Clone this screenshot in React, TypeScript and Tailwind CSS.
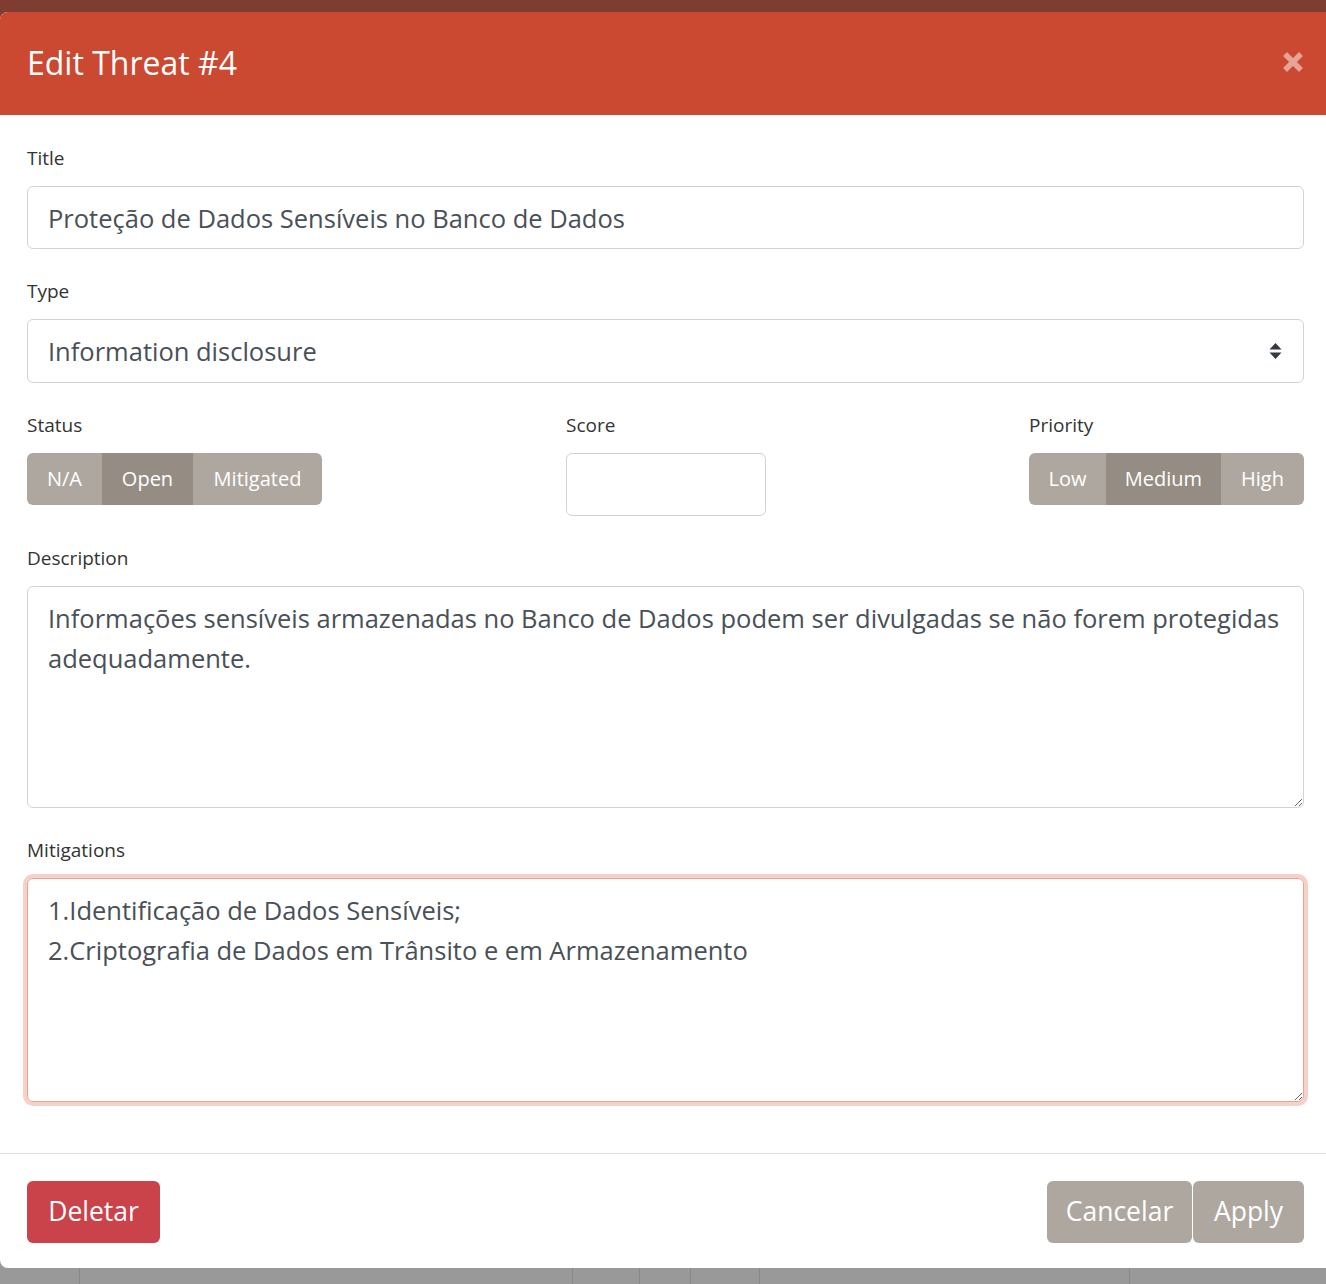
import { useState } from 'react'

const font = { fontFamily: '"Open Sans", "Noto Sans", sans-serif' }

function Label({ children }: { children: React.ReactNode }) {
  return <label className="block text-[19px] leading-[26px] text-[#333] mb-[15px]">{children}</label>
}

function Segmented({ options, active, widths }: { options: string[]; active: string; widths: string[] }) {
  return (
    <div className="inline-flex h-[52px] rounded-[6px] overflow-hidden">
      {options.map((o, i) => (
        <button
          key={o}
          type="button"
          className={`${widths[i]} h-full text-[20px] text-white flex items-center justify-center ${
            o === active ? 'bg-[#958d84]' : 'bg-[#aea79f]'
          }`}
        >
          {o}
        </button>
      ))}
    </div>
  )
}

export default function App() {
  const [title, setTitle] = useState('Proteção de Dados Sensíveis no Banco de Dados')
  const [desc, setDesc] = useState(
    'Informações sensíveis armazenadas no Banco de Dados podem ser divulgadas se não forem protegidas\nadequadamente.'
  )
  const [mit, setMit] = useState('1.Identificação de Dados Sensíveis;\n2.Criptografia de Dados em Trânsito e em Armazenamento')

  return (
    <div className="relative w-[1326px] h-[1284px] overflow-hidden bg-[#999999]" style={font}>
      {/* page behind the backdrop */}
      <div className="flex flex-col h-full">
        <div className="h-[40px] bg-[#7f3d31]" />
        <div className="flex-1" />
        <div className="h-[24px] flex border-t border-[#888]">
          <div className="w-[80px] border-r border-[#888]" />
          <div className="w-[493px] border-r border-[#888]" />
          <div className="w-[67px] border-r border-[#888]" />
          <div className="w-[51px] border-r border-[#888]" />
          <div className="w-[69px] border-r border-[#888] " />
          <div className="w-[370px] border-r border-[#888] pl-[34px] text-[18px] leading-[20px] text-[#7a2c20] -mt-[14px]">
            # 4 Proteção de Dados
          </div>
          <div className="flex-1" />
        </div>
      </div>

      {/* modal */}
      <div className="absolute left-0 top-[12px] w-[1331px] h-[1256px] bg-white rounded-tl-[8px] rounded-bl-[8px] overflow-hidden flex flex-col">
        <div className="h-[103px] shrink-0 bg-[#cb4831] flex items-center justify-between px-[27px]">
          <h2 className="text-[32px] font-medium text-white leading-none pb-[2px]">Edit Threat #4</h2>
          <button type="button" className="text-[#e6a396] mr-[1px] mt-[-4px]">
            <svg width="20" height="20" viewBox="0 0 20 20">
              <path d="M4 4 L16 16 M16 4 L4 16" stroke="currentColor" strokeWidth="5.5" strokeLinecap="square" />
            </svg>
          </button>
        </div>

        <div className="flex-1 px-[27px] pt-[30px]">
          <Label>Title</Label>
          <input
            value={title}
            onChange={e => setTitle(e.target.value)}
            className="w-full h-[63px] border border-[#ced4da] rounded-[6px] px-[20px] text-[25.5px] text-[#495057] outline-none"
          />

          <div className="mt-[29px]">
            <Label>Type</Label>
            <div className="relative h-[64px] border border-[#ced4da] rounded-[6px] flex items-center px-[20px] text-[25.5px] text-[#495057]">
              Information disclosure
              <svg className="absolute right-[21px] top-[23px]" width="13" height="16" viewBox="0 0 13 16">
                <path d="M6.5 0 L12.5 6.5 L0.5 6.5 Z M0.5 9.5 L12.5 9.5 L6.5 16 Z" fill="#343a40" />
              </svg>
            </div>
          </div>

          <div className="mt-[29px] flex">
            <div className="w-[539px]">
              <Label>Status</Label>
              <Segmented options={['N/A', 'Open', 'Mitigated']} active="Open" widths={['w-[75px]', 'w-[91px]', 'w-[129px]']} />
            </div>
            <div className="w-[463px]">
              <Label>Score</Label>
              <input className="w-[200px] h-[63px] border border-[#ced4da] rounded-[6px] outline-none" />
            </div>
            <div>
              <Label>Priority</Label>
              <Segmented options={['Low', 'Medium', 'High']} active="Medium" widths={['w-[77px]', 'w-[115px]', 'w-[83px]']} />
            </div>
          </div>

          <div className="mt-[29px]">
            <Label>Description</Label>
            <textarea
              value={desc}
              onChange={e => setDesc(e.target.value)}
              className="block w-full h-[222px] border border-[#ced4da] rounded-[6px] px-[20px] py-[11px] text-[25.5px] leading-[40px] text-[#495057] outline-none whitespace-pre overflow-hidden"
            />
          </div>

          <div className="mt-[29px]">
            <Label>Mitigations</Label>
            <textarea
              value={mit}
              onChange={e => setMit(e.target.value)}
              className="block w-full h-[224px] border border-[#eea193] rounded-[6px] px-[20px] py-[11px] text-[25.5px] leading-[40px] text-[#495057] outline-none ring-4 ring-[#f6d1c9] overflow-hidden"
            />
          </div>
        </div>

        <div className="shrink-0 border-t border-[#dee2e6] h-[115px] px-[27px] pt-[27px] flex items-start justify-between">
          <button type="button" className="h-[62px] w-[133px] rounded-[6px] bg-[#cb434a] text-white text-[26.5px]">
            Deletar
          </button>
          <div className="flex gap-[1px]">
            <button type="button" className="h-[62px] w-[145px] rounded-[6px] bg-[#aea79f] text-white text-[26.5px]">
              Cancelar
            </button>
            <button type="button" className="h-[62px] w-[111px] rounded-[6px] bg-[#aea79f] text-white text-[26.5px]">
              Apply
            </button>
          </div>
        </div>
      </div>
    </div>
  )
}
